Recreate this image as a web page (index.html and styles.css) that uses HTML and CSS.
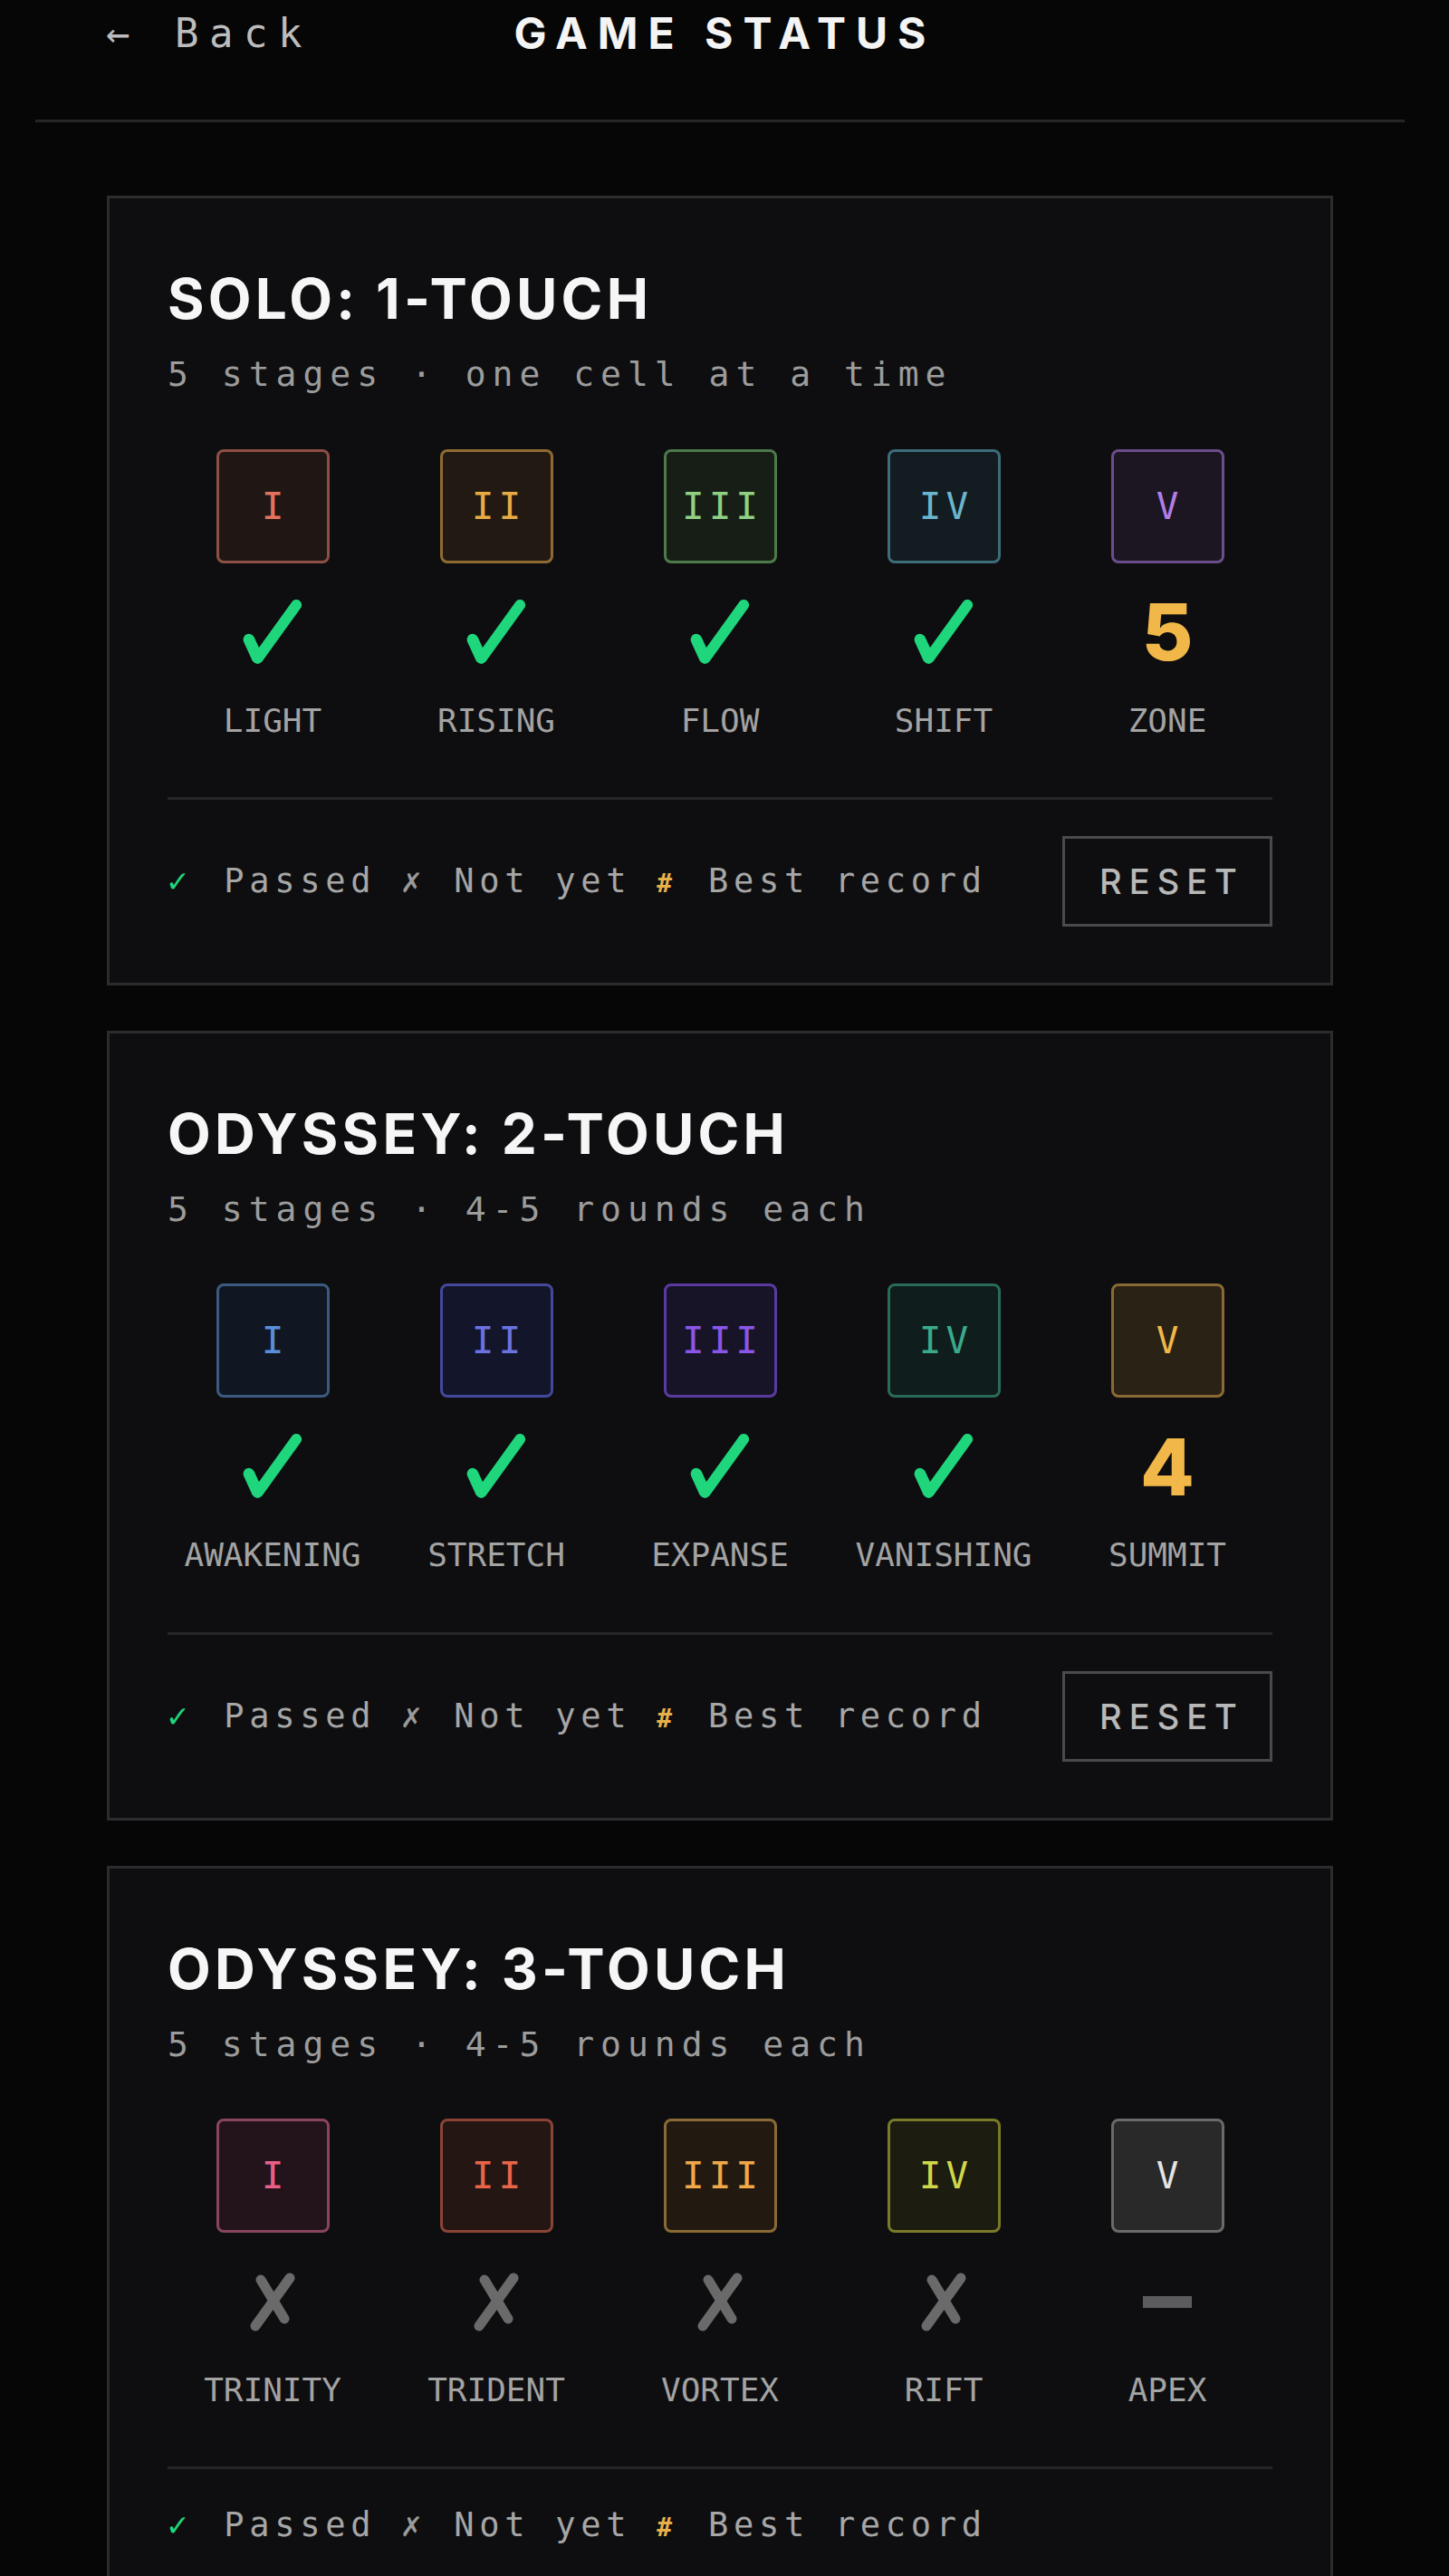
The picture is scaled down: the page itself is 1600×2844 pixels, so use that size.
FILE: index.html
```html
<!DOCTYPE html>
<html lang="en">

<head>
    <meta charset="UTF-8">
    <meta name="viewport" content="width=device-width, initial-scale=1.0">
    <title>Game Status</title>
    <link rel="stylesheet" href="styles.css">
</head>

<body>
    <div class="page">
        <header class="topbar">
            <a class="back" href="#">← Back</a>
            <h1 class="page-title">GAME STATUS</h1>
            <span></span>
        </header>

        <main class="modes">
            <!-- solo mode -->
            <section class="mode">
                <h2 class="mode-title">SOLO: 1-TOUCH</h2>
                <p class="mode-sub">5 stages · one cell at a time</p>
                <div class="stages">
                    <div class="stage">
                        <div class="tile ember">I</div>
                        <div class="mark"><svg class="tick" viewBox="-1 -1 68 74"><path d="M0.1 46.7 A6.5 6.5 0 0 1 11.9 41.3 L17.5 53.5 L55 1.5 A6 6 0 0 1 65 8.5 L21 69.5 Q15.5 75 10.1 68.7 Z"/></svg></div>
                        <div class="stage-name">LIGHT</div>
                    </div>
                    <div class="stage">
                        <div class="tile amber">II</div>
                        <div class="mark"><svg class="tick" viewBox="-1 -1 68 74"><path d="M0.1 46.7 A6.5 6.5 0 0 1 11.9 41.3 L17.5 53.5 L55 1.5 A6 6 0 0 1 65 8.5 L21 69.5 Q15.5 75 10.1 68.7 Z"/></svg></div>
                        <div class="stage-name">RISING</div>
                    </div>
                    <div class="stage">
                        <div class="tile moss">III</div>
                        <div class="mark"><svg class="tick" viewBox="-1 -1 68 74"><path d="M0.1 46.7 A6.5 6.5 0 0 1 11.9 41.3 L17.5 53.5 L55 1.5 A6 6 0 0 1 65 8.5 L21 69.5 Q15.5 75 10.1 68.7 Z"/></svg></div>
                        <div class="stage-name">FLOW</div>
                    </div>
                    <div class="stage">
                        <div class="tile teal">IV</div>
                        <div class="mark"><svg class="tick" viewBox="-1 -1 68 74"><path d="M0.1 46.7 A6.5 6.5 0 0 1 11.9 41.3 L17.5 53.5 L55 1.5 A6 6 0 0 1 65 8.5 L21 69.5 Q15.5 75 10.1 68.7 Z"/></svg></div>
                        <div class="stage-name">SHIFT</div>
                    </div>
                    <div class="stage">
                        <div class="tile violet">V</div>
                        <div class="mark"><span class="best">5</span></div>
                        <div class="stage-name">ZONE</div>
                    </div>
                </div>
                <div class="mode-foot">
                    <p class="legend"><span class="ok">✓</span> Passed <span class="no">✗</span> Not yet <span class="rec">#</span> Best record</p>
                    <button class="reset">RESET</button>
                </div>
            </section>

            <!-- odyssey, two touches -->
            <section class="mode">
                <h2 class="mode-title">ODYSSEY: 2-TOUCH</h2>
                <p class="mode-sub">5 stages · 4-5 rounds each</p>
                <div class="stages">
                    <div class="stage">
                        <div class="tile sky">I</div>
                        <div class="mark"><svg class="tick" viewBox="-1 -1 68 74"><path d="M0.1 46.7 A6.5 6.5 0 0 1 11.9 41.3 L17.5 53.5 L55 1.5 A6 6 0 0 1 65 8.5 L21 69.5 Q15.5 75 10.1 68.7 Z"/></svg></div>
                        <div class="stage-name">AWAKENING</div>
                    </div>
                    <div class="stage">
                        <div class="tile indigo">II</div>
                        <div class="mark"><svg class="tick" viewBox="-1 -1 68 74"><path d="M0.1 46.7 A6.5 6.5 0 0 1 11.9 41.3 L17.5 53.5 L55 1.5 A6 6 0 0 1 65 8.5 L21 69.5 Q15.5 75 10.1 68.7 Z"/></svg></div>
                        <div class="stage-name">STRETCH</div>
                    </div>
                    <div class="stage">
                        <div class="tile purple">III</div>
                        <div class="mark"><svg class="tick" viewBox="-1 -1 68 74"><path d="M0.1 46.7 A6.5 6.5 0 0 1 11.9 41.3 L17.5 53.5 L55 1.5 A6 6 0 0 1 65 8.5 L21 69.5 Q15.5 75 10.1 68.7 Z"/></svg></div>
                        <div class="stage-name">EXPANSE</div>
                    </div>
                    <div class="stage">
                        <div class="tile jade">IV</div>
                        <div class="mark"><svg class="tick" viewBox="-1 -1 68 74"><path d="M0.1 46.7 A6.5 6.5 0 0 1 11.9 41.3 L17.5 53.5 L55 1.5 A6 6 0 0 1 65 8.5 L21 69.5 Q15.5 75 10.1 68.7 Z"/></svg></div>
                        <div class="stage-name">VANISHING</div>
                    </div>
                    <div class="stage">
                        <div class="tile gold">V</div>
                        <div class="mark"><span class="best">4</span></div>
                        <div class="stage-name">SUMMIT</div>
                    </div>
                </div>
                <div class="mode-foot">
                    <p class="legend"><span class="ok">✓</span> Passed <span class="no">✗</span> Not yet <span class="rec">#</span> Best record</p>
                    <button class="reset">RESET</button>
                </div>
            </section>

            <!-- odyssey, three touches -->
            <section class="mode">
                <h2 class="mode-title">ODYSSEY: 3-TOUCH</h2>
                <p class="mode-sub">5 stages · 4-5 rounds each</p>
                <div class="stages">
                    <div class="stage">
                        <div class="tile rose">I</div>
                        <div class="mark"><svg class="cross" viewBox="0 0 52 67"><line x1="7" y1="60" x2="45" y2="7"/><line x1="13" y1="9" x2="39" y2="52"/></svg></div>
                        <div class="stage-name">TRINITY</div>
                    </div>
                    <div class="stage">
                        <div class="tile coral">II</div>
                        <div class="mark"><svg class="cross" viewBox="0 0 52 67"><line x1="7" y1="60" x2="45" y2="7"/><line x1="13" y1="9" x2="39" y2="52"/></svg></div>
                        <div class="stage-name">TRIDENT</div>
                    </div>
                    <div class="stage">
                        <div class="tile honey">III</div>
                        <div class="mark"><svg class="cross" viewBox="0 0 52 67"><line x1="7" y1="60" x2="45" y2="7"/><line x1="13" y1="9" x2="39" y2="52"/></svg></div>
                        <div class="stage-name">VORTEX</div>
                    </div>
                    <div class="stage">
                        <div class="tile lime">IV</div>
                        <div class="mark"><svg class="cross" viewBox="0 0 52 67"><line x1="7" y1="60" x2="45" y2="7"/><line x1="13" y1="9" x2="39" y2="52"/></svg></div>
                        <div class="stage-name">RIFT</div>
                    </div>
                    <div class="stage">
                        <div class="tile stone">V</div>
                        <div class="mark"><span class="dash"></span></div>
                        <div class="stage-name">APEX</div>
                    </div>
                </div>
                <div class="mode-foot">
                    <p class="legend"><span class="ok">✓</span> Passed <span class="no">✗</span> Not yet <span class="rec">#</span> Best record</p>
                </div>
            </section>
        </main>
    </div>
</body>

</html>
```

FILE: styles.css
```css
body {
    margin: 0;
    background-color: #060607;
    color: #d0d0d0;
    font-family: "DejaVu Sans Mono", monospace;
}

.page {
    width: 1590px;
}

/* top bar */
.topbar {
    display: grid;
    grid-template-columns: 1fr auto 1fr;
    align-items: center;
    height: 72px;
    margin: 0 39px;
    padding: 0 78px 60px;
    border-bottom: 3px solid #262628;
}

.back {
    font-family: "DejaVu Sans Mono", monospace;
    font-size: 44px;
    letter-spacing: 11.5px;
    color: #bcbcbc;
    text-decoration: none;
}

.page-title {
    margin: 0;
    font-family: Inter, "Liberation Sans", sans-serif;
    font-weight: 700;
    font-size: 48px;
    letter-spacing: 11px;
    color: #f4f4f4;
    padding-left: 11px;
}

/* mode cards */
.modes {
    display: flex;
    flex-direction: column;
    gap: 50px;
    margin: 81px 118px 0;
}

.mode {
    background-color: #0e0e10;
    border: 3px solid #2c2c2e;
    padding: 80px 64px 62px;
}

.mode-title {
    margin: 0;
    font-family: Inter, "Liberation Sans", sans-serif;
    font-weight: 700;
    font-size: 62px;
    line-height: 1;
    letter-spacing: 4.2px;
    color: #f6f6f6;
}

.mode-sub {
    margin: 30px 0 0;
    font-size: 38px;
    line-height: 1.2;
    letter-spacing: 7px;
    color: #9c9c9c;
}

.stages {
    display: grid;
    grid-template-columns: repeat(5, 1fr);
    column-gap: 15px;
    margin-top: 59px;
}

.stage {
    display: flex;
    flex-direction: column;
    align-items: center;
}

.tile {
    box-sizing: border-box;
    width: 125px;
    height: 126px;
    display: flex;
    align-items: center;
    justify-content: center;
    border: 3px solid;
    border-radius: 8px;
    font-size: 41px;
    letter-spacing: 5px;
    padding-left: 5px;
}

.tile.ember  { border-color: #8c4f45; background: #201715; color: #e2735e; }
.tile.amber  { border-color: #8f6b33; background: #221a12; color: #e7aa44; }
.tile.moss   { border-color: #4d7a4b; background: #161e16; color: #8fd083; }
.tile.teal   { border-color: #3d6c7a; background: #131c21; color: #6bb6cc; }
.tile.violet { border-color: #6c4d8c; background: #1c1622; color: #b07ee6; }

.tile.sky    { border-color: #3b5a80; background: #111722; color: #5a8ed8; }
.tile.indigo { border-color: #44489a; background: #13162a; color: #6a72e0; }
.tile.purple { border-color: #5a3aa0; background: #181428; color: #8a56e8; }
.tile.jade   { border-color: #2a6a5a; background: #0f1e1c; color: #3aaa8a; }
.tile.gold   { border-color: #8a6a34; background: #2a2214; color: #f0b848; }

.tile.rose   { border-color: #8a4460; background: #22141a; color: #e8608a; }
.tile.coral  { border-color: #8a4436; background: #241612; color: #e8644a; }
.tile.honey  { border-color: #8a6a36; background: #221a10; color: #f0a848; }
.tile.lime   { border-color: #7a7a2a; background: #1c1c10; color: #d0d84a; }
.tile.stone  { border-color: #6a6a6a; background: #29292a; color: #e4e4e4; }

.mark {
    height: 80px;
    margin-top: 36px;
    display: flex;
    align-items: center;
    justify-content: center;
}

.tick {
    width: 66px;
    height: 72px;
    fill: #1fd67c;
}

.cross {
    width: 52px;
    height: 67px;
    stroke: #6a6a6b;
    stroke-width: 11;
    stroke-linecap: round;
}

.best {
    font-family: Inter, "Liberation Sans", sans-serif;
    font-weight: 800;
    font-size: 87px;
    line-height: 1;
    color: #f1b849;
}

.dash {
    width: 54px;
    height: 13px;
    background-color: #5c5c5e;
}

.stage-name {
    margin-top: 36px;
    font-size: 36px;
    line-height: 1.2;
    color: #a3a3a3;
}

/* legend + reset */
.mode-foot {
    display: flex;
    align-items: center;
    justify-content: space-between;
    margin-top: 63px;
    padding-top: 40px;
    border-top: 3px solid #262628;
}

.legend {
    margin: 0;
    font-size: 37px;
    letter-spacing: 5.7px;
    color: #a6a6a6;
    white-space: pre;
}

.legend .ok { color: #1fd67c; font-weight: 700; letter-spacing: 12px; }
.legend .no { color: #9a9a9a; font-weight: 700; letter-spacing: 8px; }
.legend .rec { color: #e8b04a; font-size: 28px; font-weight: 700; letter-spacing: 12px; }

.reset {
    box-sizing: border-box;
    width: 232px;
    height: 100px;
    background: transparent;
    border: 3px solid #4a4a4c;
    font-family: Inter, "Liberation Sans", sans-serif;
    font-weight: 500;
    font-size: 38px;
    letter-spacing: 8px;
    padding-left: 16px;
    color: #b8b8b8;
}
```
